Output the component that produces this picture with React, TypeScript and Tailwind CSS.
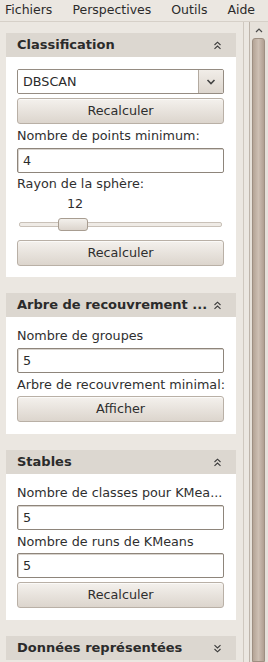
import React from "react";

const font = { fontFamily: '"DejaVu Sans", Verdana, sans-serif' };

function DoubleChevron({ down }: { down?: boolean }) {
  return (
    <svg width="9" height="9" viewBox="0 0 9 9" className={down ? "rotate-180" : ""}>
      <path d="M1.5 4 L4.5 1.2 L7.5 4" fill="none" stroke="#3a3a3a" strokeWidth="1.1" />
      <path d="M1.5 7.8 L4.5 5 L7.5 7.8" fill="none" stroke="#3a3a3a" strokeWidth="1.1" />
    </svg>
  );
}

function Header({ title, down }: { title: string; down?: boolean }) {
  return (
    <div className="h-[24px] bg-[#dcd7d0] flex items-center justify-between pl-[11px] pr-[14px]">
      <span className="text-[13px] font-bold text-[#2b2b2b] whitespace-nowrap">{title}</span>
      <DoubleChevron down={down} />
    </div>
  );
}

function Button({ label }: { label: string }) {
  return (
    <div className="h-[26px] rounded-[3px] border border-[#b9b0a6] bg-gradient-to-b from-[#f4f1ed] to-[#dcd5cd] flex items-center justify-center text-[12.75px] text-[#2e2e2e] shadow-[inset_0_1px_0_#fbfaf8]">
      {label}
    </div>
  );
}

function Field({ value }: { value: string }) {
  return (
    <div className="h-[25px] rounded-[2px] border border-[#8e857b] bg-white flex items-center pl-[5px] text-[12.75px] text-[#2b2b2b] shadow-[inset_1px_1px_0_#d8d3cd]">
      {value}
    </div>
  );
}

function Label({ text, h }: { text: string; h: string }) {
  return (
    <div className={`${h} flex items-center text-[12.75px] text-[#2f2f2f] whitespace-nowrap`}>
      {text}
    </div>
  );
}

function Panel({
  title,
  down,
  children,
  body,
}: {
  title: string;
  down?: boolean;
  children?: React.ReactNode;
  body?: string;
}) {
  return (
    <div className="w-[230px]">
      <Header title={title} down={down} />
      {children && (
        <div className={`bg-white pl-[11px] pr-[12px] ${body ?? ""}`}>{children}</div>
      )}
    </div>
  );
}

export default function App() {
  return (
    <div
      className="w-[268px] h-[662px] overflow-hidden bg-[#ebe7e1] flex flex-col"
      style={font}
    >
      <div className="h-[22px] flex items-center gap-[20px] pl-[5px] text-[12.5px] text-[#2b2b2b] border-b border-[#d6d0c8] shrink-0">
        <span>Fichiers</span>
        <span>Perspectives</span>
        <span>Outils</span>
        <span>Aide</span>
      </div>
      <div className="flex flex-1 min-h-0">
        <div className="w-[244px] border-r border-[#cfc8bf] pl-[6px] pt-[11px] flex flex-col gap-[16px]">
          <Panel title="Classification" body="pt-[12px] pb-[11px]">
            <div className="h-[25px] flex rounded-[2px] border border-[#958c82] overflow-hidden">
              <div className="flex-1 bg-white flex items-center pl-[5px] text-[12.75px] text-[#2b2b2b]">
                DBSCAN
              </div>
              <div className="w-[25px] border-l border-[#b3aaa0] bg-gradient-to-b from-[#f1ede8] to-[#ddd6ce] flex items-center justify-center">
                <svg width="10" height="6" viewBox="0 0 10 6">
                  <path d="M1.5 1 L5 4.5 L8.5 1" fill="none" stroke="#444" strokeWidth="1.6" />
                </svg>
              </div>
            </div>
            <div className="mt-[4px]">
              <Button label="Recalculer" />
            </div>
            <Label text="Nombre de points minimum:" h="h-[24px]" />
            <Field value="4" />
            <Label text="Rayon de la sphère:" h="h-[22px]" />
            <div className="h-[18px] flex items-center text-[12.75px] text-[#2f2f2f] pl-[50px]">12</div>
            <div className="h-[23px] flex items-center pl-[2px] pr-[2px]">
              <div className="relative w-full h-[5px] rounded-[2px] border border-[#c9c1b8] bg-[#efebe6]">
                <div className="absolute left-[38px] top-[-5px] w-[30px] h-[13px] rounded-[3px] border border-[#a89d91] bg-gradient-to-b from-[#f3f0ec] to-[#dcd5cd]" />
              </div>
            </div>
            <div className="mt-[4px]">
              <Button label="Recalculer" />
            </div>
          </Panel>
          <Panel title="Arbre de recouvrement ..." body="pt-[7px] pb-[12px]">
            <Label text="Nombre de groupes" h="h-[24px]" />
            <Field value="5" />
            <Label text="Arbre de recouvrement minimal:" h="h-[23px]" />
            <Button label="Afficher" />
          </Panel>
          <Panel title="Stables" body="pt-[7px] pb-[12px]">
            <Label text="Nombre de classes pour KMea..." h="h-[24px]" />
            <Field value="5" />
            <Label text="Nombre de runs de KMeans" h="h-[23px]" />
            <Field value="5" />
            <div className="mt-[4px]">
              <Button label="Recalculer" />
            </div>
          </Panel>
          <Panel title="Données représentées" down />
        </div>
        <div className="w-[24px] pl-[5px] bg-[#ebe7e1]">
          <div className="h-full border-l border-[#bdb4aa] bg-[#e6e1da] flex flex-col items-center pl-[2px] pr-[3px]">
            <div className="h-[16px] flex items-center justify-center">
              <svg width="8" height="5" viewBox="0 0 8 5">
                <path d="M1 4 L4 1 L7 4" fill="none" stroke="#4a4a4a" strokeWidth="1.2" />
              </svg>
            </div>
            <div className="flex-1 w-full rounded-t-[3px] border border-[#9e8f82] bg-gradient-to-r from-[#b4a496] via-[#cdbfb3] to-[#b09f91]" />
          </div>
        </div>
      </div>
    </div>
  );
}
